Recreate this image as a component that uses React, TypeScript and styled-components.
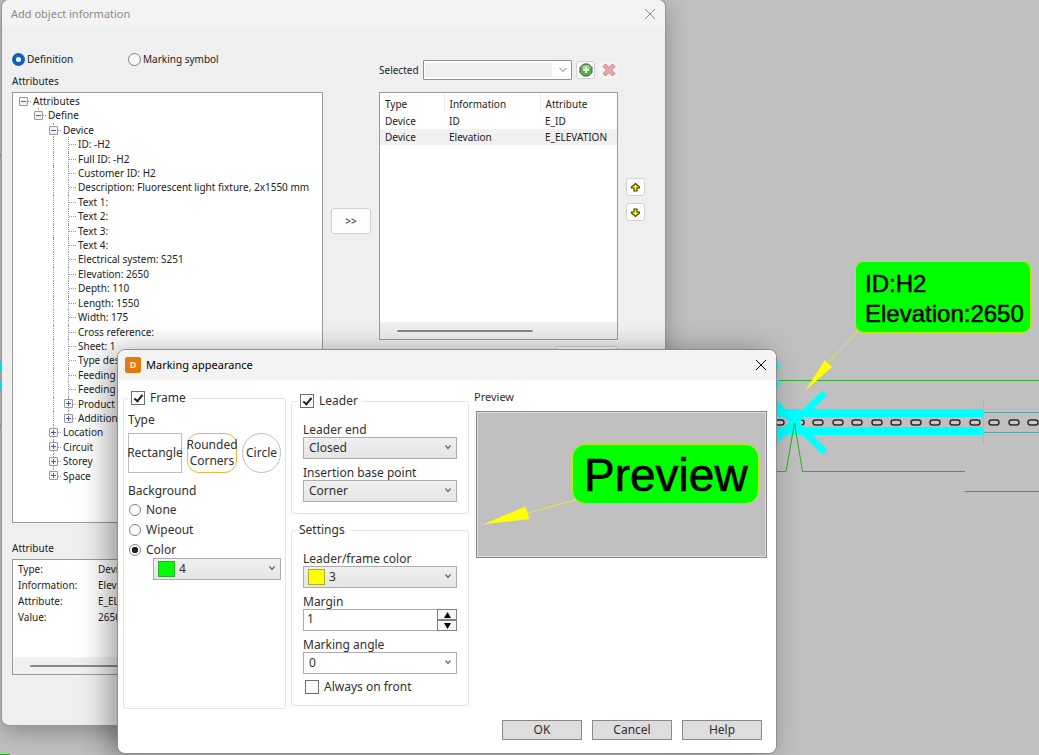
import React, { useState } from "react";
import styled, { createGlobalStyle, css } from "styled-components";

const GlobalStyle = createGlobalStyle`
  *, *::before, *::after { box-sizing: border-box; }
  html, body { margin: 0; background: #c0c0c0; }
  button, input, select { font: inherit; color: inherit; margin: 0; }
`;

const legacyFont = `"Noto Sans", Tahoma, sans-serif`;
const dialogFont = `"Noto Sans", "Segoe UI", sans-serif`;

/* ---------- desktop ---------- */

const Desktop = styled.main`
  position: relative;
  min-height: 100vh;
  overflow: hidden;
  background: #c0c0c0;
`;

const CadCanvas = styled.svg`
  position: absolute;
  top: 0;
  right: 0;
`;

const Window = styled.section`
  position: absolute;
  overflow: hidden;
`;

const BackWindow = styled(Window)`
  left: 2px;
  right: 374px;
  top: 0;
  background: #efefef;
  border-radius: 7px;
  box-shadow: 0 0 0 1px #999, 0 6px 24px rgba(0, 0, 0, 0.3);
  font: 10px/16px ${legacyFont};
  color: #222;
`;

const FrontWindow = styled(Window)`
  left: 117px;
  right: 262px;
  top: 349px;
  background: #fff;
  border: 1px solid #8c8c8c;
  border-radius: 8px;
  box-shadow: -8px 4px 30px rgba(0, 0, 0, 0.38);
  font: 12px/16px ${dialogFont};
  color: #303030;
`;

const TitleBar = styled.header<{ $active?: boolean }>`
  display: flex;
  align-items: center;
  gap: 5px;
  height: ${(p) => (p.$active ? 30 : 28)}px;
  padding: 0 9px 0 ${(p) => (p.$active ? 7 : 9)}px;
  background: #f3f3f3;
  color: ${(p) => (p.$active ? "#000" : "#8a8a8a")};
  font-size: 11px;
`;

const Title = styled.h1`
  flex: 1;
  margin: 0;
  font: inherit;
`;

const CloseButton = styled.button`
  display: flex;
  padding: 0;
  border: 0;
  background: none;
`;

const Logo = styled.span`
  display: grid;
  place-items: center;
  width: 16px;
  height: 16px;
  border-radius: 2px;
  background: #e57a0c;
  color: #ffe9cf;
  font-size: 9px;
  font-weight: 700;
`;

const CloseIcon = () => (
  <svg width="12" height="12" viewBox="0 0 12 12" fill="none" stroke="currentColor">
    <path d="M1 1 11 11M11 1 1 11" />
  </svg>
);

/* ---------- object information window ---------- */

const InfoBody = styled.div`
  display: grid;
  grid-template-columns: minmax(0, 1fr) 40px 239px 19px;
  gap: 8px;
  padding: 23px 20px 50px 10px;
`;

const Column = styled.div<{ $top?: number; $gap?: number }>`
  display: flex;
  flex-direction: column;
  gap: ${(p) => p.$gap ?? 0}px;
  padding-top: ${(p) => p.$top ?? 0}px;
`;

const ModeRow = styled.div`
  display: grid;
  grid-template-columns: 116px auto;
  margin-bottom: 6px;
`;

const ModeLabel = styled.label`
  display: flex;
  align-items: center;
  gap: 2px;
`;

const ModeRadio = styled.input`
  appearance: none;
  width: 13px;
  height: 13px;
  border: 1px solid #808080;
  border-radius: 50%;
  background: #f7f7f7;
  &:checked {
    border: 4px solid #0a63b8;
    background: #fff;
  }
`;

const Caption = styled.h2<{ $space?: number }>`
  margin: ${(p) => p.$space ?? 0}px 0 3px;
  font: inherit;
`;

const Panel = styled.div<{ $h: number }>`
  display: flex;
  flex-direction: column;
  justify-content: space-between;
  height: ${(p) => p.$h}px;
  border: 1px solid #9a9a9a;
  background: #fff;
`;

const TreeList = styled.ul`
  display: grid;
  grid-auto-rows: 1fr;
  height: 390px;
  margin: 0;
  padding: 1px 0 0 3px;
  list-style: none;
`;

const TreeRow = styled.li`
  display: flex;
  align-items: stretch;
  line-height: 14px;
  white-space: nowrap;
`;

const Guide = styled.span<{ $up?: boolean; $down?: boolean; $arm?: boolean }>`
  position: relative;
  display: grid;
  place-items: center;
  width: 15px;
  ${(p) =>
    (p.$up || p.$down) &&
    css`
      &::before {
        content: "";
        position: absolute;
        left: 7px;
        top: ${p.$up ? 0 : 50}%;
        bottom: ${p.$down ? 0 : 50}%;
        border-left: 1px dotted #999;
      }
    `}
  ${(p) =>
    p.$arm &&
    css`
      &::after {
        content: "";
        position: absolute;
        left: 8px;
        right: 0;
        top: 7px;
        border-top: 1px dotted #999;
      }
    `}
`;

const Toggle = styled.button<{ $open?: boolean }>`
  position: relative;
  z-index: 1;
  width: 9px;
  height: 9px;
  padding: 0;
  border: 1px solid #999;
  border-radius: 1px;
  background: linear-gradient(#4b5fa8, #4b5fa8) center / 5px 1px no-repeat,
    ${(p) => (p.$open ? "" : "linear-gradient(#4b5fa8, #4b5fa8) center / 1px 5px no-repeat,")}
    #f4f4f4;
`;

const NodeText = styled.span`
  padding-left: 2px;
`;

type Node = { text: string; depth: number; toggle?: "open" | "closed"; last?: boolean };

const nodes: Node[] = [
  { text: "Attributes", depth: 0, toggle: "open", last: true },
  { text: "Define", depth: 1, toggle: "open", last: true },
  { text: "Device", depth: 2, toggle: "open" },
  ...[
    "ID: -H2",
    "Full ID: -H2",
    "Customer ID: H2",
    "Description: Fluorescent light fixture, 2x1550 mm",
    "Text 1:",
    "Text 2:",
    "Text 3:",
    "Text 4:",
    "Electrical system: S251",
    "Elevation: 2650",
    "Depth: 110",
    "Length: 1550",
    "Width: 175",
    "Cross reference:",
    "Sheet: 1",
    "Type desc",
    "Feeding 1:",
    "Feeding 2:",
  ].map((text) => ({ text, depth: 3 })),
  { text: "Product info", depth: 3, toggle: "closed" },
  { text: "Additional", depth: 3, toggle: "closed", last: true },
  { text: "Location", depth: 2, toggle: "closed" },
  { text: "Circuit", depth: 2, toggle: "closed" },
  { text: "Storey", depth: 2, toggle: "closed" },
  { text: "Space", depth: 2, toggle: "closed", last: true },
];

const TreeNode = ({ node }: { node: Node }) => (
  <TreeRow>
    {Array.from({ length: node.depth }, (_, i) => (
      <Guide key={i} $up={i === 2} $down={i === 2} />
    ))}
    <Guide $arm $up={node.depth > 0} $down={!node.last}>
      {node.toggle && <Toggle $open={node.toggle === "open"} aria-label={`Toggle ${node.text}`} />}
    </Guide>
    <NodeText>{node.text}</NodeText>
  </TreeRow>
);

const Details = styled.dl`
  display: grid;
  grid-template-columns: 80px 1fr;
  margin: 0;
  padding: 1px 5px;
`;

const Definition = styled.dd`
  margin: 0;
`;

const ScrollTrack = styled.div`
  display: flex;
  align-items: center;
  height: 17px;
  padding: 0 17px;
  background: #f0f0f0;
`;

const ScrollThumb = styled.span<{ $w: number }>`
  width: ${(p) => p.$w}px;
  height: 2px;
  border-radius: 1px;
  background: #888;
`;

const SelectedRow = styled.div`
  display: flex;
  align-items: center;
  gap: 4px;
  height: 20px;
  margin-bottom: 12px;
`;

const SelectedLabel = styled.label`
  width: 40px;
`;

const Picker = styled.div`
  position: relative;
  display: flex;
  width: 150px;
  height: 20px;
`;

const SelectedBox = styled.select`
  appearance: none;
  width: 100%;
  padding: 0 20px 0 4px;
  border: 1px solid #8f8f8f;
  border-radius: 1px;
  background: linear-gradient(#f0f0f0, #f0f0f0) 1px 2px / 127px 14px no-repeat, #fff;
`;

const Chevron = styled.svg`
  position: absolute;
  right: 5px;
  top: 50%;
  transform: translateY(-50%);
  pointer-events: none;
`;

const ToolButton = styled.button<{ $flat?: boolean }>`
  display: grid;
  place-items: center;
  width: 19px;
  height: 18px;
  padding: 0;
  border: 1px solid ${(p) => (p.$flat ? "#f2f2f2" : "#d2d2d2")};
  border-radius: 3px;
  background: ${(p) => (p.$flat ? "#f4f4f4" : "#fdfdfd")};
`;

const PushButton = styled.button<{ $w: number }>`
  width: ${(p) => p.$w}px;
  height: 26px;
  padding: 0;
  border: 1px solid #d0d0d0;
  border-radius: 3px;
  background: #fdfdfd;
  align-self: flex-end;
`;

const Table = styled.table`
  width: 100%;
  border-collapse: collapse;
  table-layout: fixed;
  text-align: left;
`;

const HeadCell = styled.th<{ $w?: number }>`
  width: ${(p) => (p.$w ? p.$w + "px" : "auto")};
  height: 20px;
  padding: 2px 5px 0;
  border-right: 1px solid #ececec;
  font-weight: 400;
  &:last-child { border-right: 0; }
`;

const BodyRow = styled.tr<{ $selected?: boolean }>`
  background: ${(p) => (p.$selected ? "#f0f0f0" : "#fff")};
`;

const BodyCell = styled.td`
  height: 16px;
  padding: 0 5px;
`;

const MoveIcon = ({ down }: { down?: boolean }) => (
  <svg width="11" height="11" viewBox="0 0 11 11">
    <path
      d={
        down
          ? "M4 2H7V5H9.5V6L5.5 9.500 1.500 6V5H4Z"
          : "M4 9H7V6H9.5V5L5.5 1.500 1.500 5V6H4Z"
      }
      fill="#ff0"
      stroke="#3c3c14"
      strokeWidth="1.2"
    />
  </svg>
);

const AddIcon = () => (
  <svg width="14" height="14" viewBox="0 0 14 14">
    <path d="M4.500 1H9.500L13 4.500V9.500L9.500 13H4.500L1 9.500V4.500Z" fill="#5faa54" stroke="#3d5a3a" />
    <path d="M5 2H9L11.500 4.500 10 6H4L2.500 4.500Z" fill="#9ad48e" />
    <path d="M7 4V10M4 7H10" stroke="#e6f8e2" strokeWidth="2" />
  </svg>
);

const DeleteIcon = () => (
  <svg width="14" height="14" viewBox="0 0 14 14">
    <path
      d="M3.500 1 7 4.500 10.500 1 13 3.500 9.500 7 13 10.500 10.500 13 7 9.500 3.500 13 1 10.500 4.500 7 1 3.500Z"
      fill="#f0a0a0"
      stroke="#c98484"
    />
  </svg>
);

function ObjectInfoWindow() {
  const [mode, setMode] = useState("definition");
  return (
    <BackWindow>
      <TitleBar>
        <Title>Add object information</Title>
        <CloseButton aria-label="Close"><CloseIcon /></CloseButton>
      </TitleBar>
      <InfoBody>
        <Column>
          <ModeRow>
            <ModeLabel>
              <ModeRadio type="radio" name="mode" checked={mode === "definition"} onChange={() => setMode("definition")} />
              Definition
            </ModeLabel>
            <ModeLabel>
              <ModeRadio type="radio" name="mode" checked={mode === "symbol"} onChange={() => setMode("symbol")} />
              Marking symbol
            </ModeLabel>
          </ModeRow>
          <Caption>Attributes</Caption>
          <Panel $h={431}>
            <TreeList>
              {nodes.map((n, i) => <TreeNode key={i} node={n} />)}
            </TreeList>
          </Panel>
          <Caption $space={17}>Attribute</Caption>
          <Panel $h={116}>
            <Details>
              <dt>Type:</dt><Definition>Device</Definition>
              <dt>Information:</dt><Definition>Elevation</Definition>
              <dt>Attribute:</dt><Definition>E_ELEVATION</Definition>
              <dt>Value:</dt><Definition>2650</Definition>
            </Details>
            <ScrollTrack><ScrollThumb $w={200} /></ScrollTrack>
          </Panel>
        </Column>
        <Column $top={157}>
          <PushButton $w={40}>&gt;&gt;</PushButton>
        </Column>
        <Column $top={9}>
          <SelectedRow>
            <SelectedLabel htmlFor="selected">Selected</SelectedLabel>
            <Picker>
              <SelectedBox id="selected" />
              <Chevron width="8" height="5" viewBox="0 0 8 5" fill="none" stroke="#777">
                <path d="M0.500 0.500 4 4 7.500 0.500" />
              </Chevron>
            </Picker>
            <ToolButton aria-label="Add"><AddIcon /></ToolButton>
            <ToolButton $flat aria-label="Delete"><DeleteIcon /></ToolButton>
          </SelectedRow>
          <Panel $h={248}>
            <Table>
              <thead>
                <tr>
                  <HeadCell $w={64}>Type</HeadCell>
                  <HeadCell $w={96}>Information</HeadCell>
                  <HeadCell>Attribute</HeadCell>
                </tr>
              </thead>
              <tbody>
                <BodyRow>
                  <BodyCell>Device</BodyCell><BodyCell>ID</BodyCell><BodyCell>E_ID</BodyCell>
                </BodyRow>
                <BodyRow $selected>
                  <BodyCell>Device</BodyCell><BodyCell>Elevation</BodyCell><BodyCell>E_ELEVATION</BodyCell>
                </BodyRow>
              </tbody>
            </Table>
            <ScrollTrack><ScrollThumb $w={136} /></ScrollTrack>
          </Panel>
          <Column $top={6}>
            <PushButton $w={63} aria-label="More" />
          </Column>
        </Column>
        <Column $top={127} $gap={7}>
          <ToolButton aria-label="Move up"><MoveIcon /></ToolButton>
          <ToolButton aria-label="Move down"><MoveIcon down /></ToolButton>
        </Column>
      </InfoBody>
    </BackWindow>
  );
}

/* ---------- marking appearance dialog ---------- */

const DialogBody = styled.div`
  display: grid;
  grid-template-columns: 163px 178px minmax(0, 1fr);
  column-gap: 5px;
  padding: 10px 9px 0 5px;
`;

const Group = styled.fieldset<{ $pad: string }>`
  min-width: 0;
  margin: 0;
  padding: ${(p) => p.$pad};
  border: 1px solid #dfe5e8;
  border-radius: 3px;
`;

const Legend = styled.legend<{ $indent?: number }>`
  height: 16px;
  margin-left: ${(p) => p.$indent ?? 0}px;
  padding: 0 5px 0 3px;
`;

const Middle = styled.div`
  display: flex;
  flex-direction: column;
  gap: 8px;
  padding: 3px 0;
`;

const Check = styled.label`
  display: flex;
  align-items: center;
  gap: 5px;
`;

const TightCheck = styled(Check)`
  padding-left: 2px;
  line-height: 14px;
`;

const CheckBox = styled.input`
  appearance: none;
  display: grid;
  place-items: center;
  width: 14px;
  height: 14px;
  border: 1px solid #707070;
  background: #fff;
  &:checked::after {
    content: "";
    width: 5px;
    height: 9px;
    margin-top: -2px;
    border: solid #222;
    border-width: 0 2px 2px 0;
    transform: rotate(40deg);
  }
`;

const Heading = styled.h2<{ $top: number }>`
  margin: ${(p) => p.$top}px 0 0;
  font: inherit;
`;

const PreviewHeading = styled(Heading)`
  font-size: 11px;
`;

const ShapeRow = styled.div`
  display: flex;
  gap: 5px;
  margin-top: 5px;
`;

const ShapeButton = styled.button<{ $w: number; $radius: number; $active?: boolean }>`
  display: flex;
  align-items: center;
  justify-content: center;
  width: ${(p) => p.$w}px;
  height: 40px;
  padding: 0;
  border: 1px solid ${(p) => (p.$active ? "#f5b340" : "#bdbdbd")};
  border-radius: ${(p) => p.$radius}px;
  background: #fff;
  white-space: nowrap;
`;

const RadioList = styled.div`
  display: flex;
  flex-direction: column;
  gap: 4px;
  margin-top: 3px;
  padding-left: 1px;
`;

const RadioInput = styled.input`
  appearance: none;
  width: 12px;
  height: 12px;
  border: 1px solid #808080;
  border-radius: 50%;
  background: #fff;
  &:checked {
    background: radial-gradient(circle, #222 0 3px, #fff 3px);
  }
`;

const Fields = styled.div`
  display: flex;
  flex-direction: column;
  gap: 6px;
`;

const FieldLabel = styled.label`
  display: block;
  line-height: 15px;
`;

const Combo = styled.div<{ $indent?: number }>`
  position: relative;
  display: flex;
  height: 22px;
  margin-left: ${(p) => p.$indent ?? 0}px;
`;

const Select = styled.select<{ $swatch?: boolean; $plain?: boolean }>`
  appearance: none;
  width: 100%;
  padding: 0 20px 0 ${(p) => (p.$swatch ? 25 : 5)}px;
  border: 1px solid #acacac;
  border-radius: 0;
  background: ${(p) => (p.$plain ? "#fff" : "linear-gradient(#f0f0f0, #e5e5e5)")};
`;

const Swatch = styled.span<{ $color: string }>`
  position: absolute;
  left: 5px;
  top: 3px;
  width: 17px;
  height: 16px;
  border: 1px solid rgba(90, 90, 90, 0.5);
  background: ${(p) => p.$color};
  pointer-events: none;
`;

const Spinner = styled.div`
  display: flex;
  height: 22px;
`;

const NumberBox = styled.input`
  flex: 1;
  min-width: 0;
  padding: 0 3px 2px;
  border: 1px solid #acacac;
  border-right: 0;
`;

const Steps = styled.div`
  display: grid;
  grid-template-rows: 1fr 1fr;
  width: 20px;
`;

const Step = styled.button`
  display: grid;
  place-items: center;
  padding: 0;
  border: 1px solid #808080;
  background: #f6f6f6;
`;

const ComboArrow = () => (
  <Chevron width="8" height="8" viewBox="0 0 8 8" fill="none" stroke="#666" strokeWidth="1.2">
    <path d="M1.500 1.500 4 4.500 6.500 1.500" />
  </Chevron>
);

const PreviewArea = styled.div`
  margin-top: -1px;
`;

const PreviewBox = styled.div`
  height: 147px;
  margin: 6px 0 0 2px;
  border: 1px solid #8a8a8a;
  outline: 1px solid #dcdcdc;
  outline-offset: -2px;
  background: #c0c0c0;
`;

const MarkText = styled.text`
  font-family: "Liberation Sans", Arial, sans-serif;
  font-size: 46px;
  stroke: #000;
  stroke-width: 0.6px;
`;

const Actions = styled.footer`
  display: flex;
  justify-content: flex-end;
  gap: 10px;
  padding: 11px 14px 13px;
`;

const ActionButton = styled.button`
  width: 80px;
  height: 20px;
  padding: 0;
  border: 1px solid #8a8a8a;
  background: #dddddd;
  line-height: 18px;
`;

function MarkingDialog() {
  const [fill, setFill] = useState("Color");
  return (
    <FrontWindow role="dialog" aria-label="Marking appearance">
      <TitleBar $active>
        <Logo>D</Logo>
        <Title>Marking appearance</Title>
        <CloseButton aria-label="Close"><CloseIcon /></CloseButton>
      </TitleBar>
      <DialogBody>
        <Group $pad="6px 4px 120px">
          <Legend><Check><CheckBox type="checkbox" defaultChecked />Frame</Check></Legend>
          <Heading $top={0}>Type</Heading>
          <ShapeRow>
            <ShapeButton $w={54} $radius={0}>Rectangle</ShapeButton>
            <ShapeButton $w={50} $radius={12} $active>Rounded<br />Corners</ShapeButton>
            <ShapeButton $w={40} $radius={20}>Circle</ShapeButton>
          </ShapeRow>
          <Heading $top={10}>Background</Heading>
          <RadioList>
            {["None", "Wipeout", "Color"].map((v) => (
              <Check key={v}>
                <RadioInput type="radio" name="fill" checked={fill === v} onChange={() => setFill(v)} />
                {v}
              </Check>
            ))}
          </RadioList>
          <Combo $indent={25}>
            <Select $swatch aria-label="Background color"><option>4</option></Select>
            <Swatch $color="#00ff00" />
            <ComboArrow />
          </Combo>
        </Group>
        <Middle>
          <Group $pad="13px 11px 11px">
            <Legend $indent={-6}><Check><CheckBox type="checkbox" defaultChecked />Leader</Check></Legend>
            <Fields>
              <div>
                <FieldLabel htmlFor="end">Leader end</FieldLabel>
                <Combo><Select id="end"><option>Closed</option></Select><ComboArrow /></Combo>
              </div>
              <div>
                <FieldLabel htmlFor="base">Insertion base point</FieldLabel>
                <Combo><Select id="base"><option>Corner</option></Select><ComboArrow /></Combo>
              </div>
            </Fields>
          </Group>
          <Group $pad="13px 11px 11px">
            <Legend $indent={-7}>Settings</Legend>
            <Fields>
              <div>
                <FieldLabel htmlFor="color">Leader/frame color</FieldLabel>
                <Combo>
                  <Select id="color" $swatch><option>3</option></Select>
                  <Swatch $color="#ffff00" />
                  <ComboArrow />
                </Combo>
              </div>
              <div>
                <FieldLabel htmlFor="margin">Margin</FieldLabel>
                <Spinner>
                  <NumberBox id="margin" type="text" defaultValue="1" />
                  <Steps>
                    <Step aria-label="Increase"><svg width="7" height="6"><path d="M0 6 3.500 0 7 6Z" /></svg></Step>
                    <Step aria-label="Decrease"><svg width="7" height="6"><path d="M0 0 3.500 6 7 0Z" /></svg></Step>
                  </Steps>
                </Spinner>
              </div>
              <div>
                <FieldLabel htmlFor="angle">Marking angle</FieldLabel>
                <Combo><Select id="angle" $plain><option>0</option></Select><ComboArrow /></Combo>
              </div>
              <TightCheck><CheckBox type="checkbox" />Always on front</TightCheck>
            </Fields>
          </Group>
        </Middle>
        <PreviewArea>
          <PreviewHeading $top={0}>Preview</PreviewHeading>
          <PreviewBox>
            <svg width="100%" height="145" viewBox="478 412 289 145" preserveAspectRatio="xMaxYMin meet">
              <path d="M529 513 580 499" stroke="#e6e63c" />
              <rect x="573.500" y="444.500" width="186" height="59" rx="13" fill="#0f0" stroke="#b4f000" />
              <path d="M484 524.500 526.500 506.500 530.500 519Z" fill="#ff0" />
              <MarkText x="585" y="491">Preview</MarkText>
            </svg>
          </PreviewBox>
        </PreviewArea>
      </DialogBody>
      <Actions>
        <ActionButton>OK</ActionButton>
        <ActionButton>Cancel</ActionButton>
        <ActionButton>Help</ActionButton>
      </Actions>
    </FrontWindow>
  );
}

/* ---------- drawing behind the windows ---------- */

const TagText = styled.text`
  font-family: "Liberation Sans", Arial, sans-serif;
  font-size: 24px;
  stroke: #000;
  stroke-width: 0.5px;
`;

const slots = [779, 799, 818, 838, 857, 877, 896, 916, 935, 955, 975, 994, 1014, 1033];

const Drawing = () => (
  <CadCanvas width="1039" height="755" viewBox="0 0 1039 755" fill="none">
    <path d="M0 155.500H3M0 425.500H3M777 380.500H1039" stroke="#35b435" />
    <path d="M0 754.500H10" stroke="#00c800" />
    <path d="M0 362V372M0 382V390M777.500 362V370M777.500 380V387" stroke="#0ff" strokeWidth="3" />
    <path d="M984 412.500H1039M984 432.500H1039" stroke="#5fa3a3" />
    {slots.map((x) => (
      <rect key={x} x={x - 5} y="420" width="10" height="5" rx="2.500" fill="#cfc8c8" stroke="#2a2a2a" strokeWidth="1.4" />
    ))}
    <path d="M770 413H984M770 431H984" stroke="#0ff" strokeWidth="8" />
    <path d="M825 393 764 451M825 452 764 393" stroke="#0ff" strokeWidth="7" />
    <path d="M784 412H804L799 422 804 432H784L789 422Z" fill="#0ff" />
    <path d="M983.500 400V444" stroke="#0ff" />
    <path d="M777 471.500H786L794.500 423 802.500 471.500H965M965 491.500H1039" stroke="#22b422" />
    <path d="M829 362 860 329" stroke="#e8e830" />
    <path d="M805 391 825 360 832 367Z" fill="#ff0" />
    <rect x="855.500" y="261.500" width="175" height="71" rx="8" fill="#0f0" stroke="#b4f000" />
    <g fill="#000">
      <TagText x="865" y="292">ID:H2</TagText>
      <TagText x="865" y="322">Elevation:2650</TagText>
    </g>
  </CadCanvas>
);

export default function App() {
  return (
    <>
      <GlobalStyle />
      <Desktop>
        <Drawing />
        <ObjectInfoWindow />
        <MarkingDialog />
      </Desktop>
    </>
  );
}
